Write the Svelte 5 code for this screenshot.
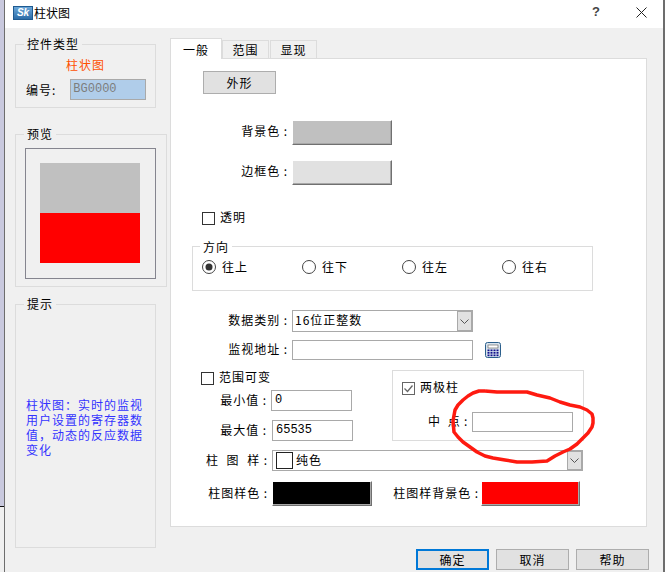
<script lang="ts">
  const tabs = ["一般", "范围", "显现"];
  const directions = ["往上", "往下", "往左", "往右"];
  const actions = ["确定", "取消", "帮助"];
  const scribble =
    "485,391 497,392 512,392 527,392 537,395 550,398 560,402 570,405 580,407 587,410 592,414 593,418 593,423 592,427 588,433 583,438 577,444 570,449 563,452 555,456 547,461 532,462 517,462 505,460 493,458 485,456 477,452 470,447 463,442 458,437 454,432 453,421 455,410 458,405 463,400 468,396 473,393 479,391 485,391";
</script>

<div class="window">
  <div class="strip"></div>
  <div class="dialog">
    <header class="titlebar">
      <div class="logo"><span>Sk</span></div>
      <span class="title">柱状图</span>
      <span class="help">?</span>
      <svg class="close" width="11" height="11" viewBox="0 0 11 11">
        <path d="M.5.5l10 10M10.5.5l-10 10" stroke="#222" fill="none" />
      </svg>
    </header>

    <div class="content">
      <aside class="side">
        <section class="group type-box">
          <span class="legend">控件类型</span>
          <div class="type-name">柱状图</div>
          <div class="type-row">
            <span>编号:</span>
            <div class="code">BG0000</div>
          </div>
        </section>

        <section class="group preview-box">
          <span class="legend">预览</span>
          <div class="preview-frame">
            <div class="bar">
              <div class="bar__bg"></div>
              <div class="bar__fg"></div>
            </div>
          </div>
        </section>

        <section class="group tip-box">
          <span class="legend">提示</span>
          <p class="tip">柱状图：实时的监视用户设置的寄存器数值，动态的反应数据变化</p>
        </section>
      </aside>

      <main class="main">
        <div class="tabs">
          {#each tabs as tab, i}
            <div class="tab" class:tab--active={i === 0}>{tab}</div>
          {/each}
        </div>

        <div class="page">
          <button class="shape-btn">外形</button>

          <div class="row row--bg">
            <span class="label">背景色&thinsp;:</span>
            <div class="swatch swatch--gray"></div>
          </div>
          <div class="row row--border">
            <span class="label">边框色&thinsp;:</span>
            <div class="swatch swatch--light"></div>
          </div>

          <div class="check check--clear"><span class="box"></span><span class="check__text">透明</span></div>

          <section class="group dir-box">
            <span class="legend">方向</span>
            <div class="radios">
              {#each directions as dir, i}
                <div class="radio">
                  <svg width="14" height="14" viewBox="0 0 14 14">
                    <circle cx="7" cy="7" r="6.5" fill="#fff" stroke="#444" />
                    {#if i === 0}<circle cx="7" cy="7" r="3.5" fill="#333" />{/if}
                  </svg>
                  <span>{dir}</span>
                </div>
              {/each}
            </div>
          </section>

          <div class="row row--type">
            <span class="label">数据类别&thinsp;:</span>
            <div class="select select--type">
              <span class="select__text">16位正整数</span>
              <span class="select__arrow">
                <svg width="9" height="5" viewBox="0 0 9 5"><path d="M.5.5l4 4 4-4" fill="none" stroke="#555" /></svg>
              </span>
            </div>
          </div>
          <div class="row row--addr">
            <span class="label">监视地址&thinsp;:</span>
            <div class="input input--addr"></div>
            <svg class="calc" width="16" height="16" viewBox="0 0 16 16">
              <rect x=".5" y=".5" width="15" height="15" rx="2" fill="#d9e4ee" stroke="#2b5f8c" />
              <rect x="3" y="3" width="10" height="3" fill="#fff" stroke="#555" stroke-width=".6" />
              {#each [7.5, 10, 12.5] as y}
                {#each [2.5, 5.5, 8.5, 11.5] as x}
                  <rect {x} {y} width="2" height="1.7" fill="#10108c" />
                {/each}
              {/each}
            </svg>
          </div>

          <div class="split">
            <div class="range">
              <div class="check check--range"><span class="box"></span><span class="check__text">范围可变</span></div>
              <div class="row row--min">
                <span class="label">最小值&thinsp;:</span>
                <div class="input input--min">0</div>
              </div>
              <div class="row row--max">
                <span class="label">最大值&thinsp;:</span>
                <div class="input input--min">65535</div>
              </div>
            </div>
            <div class="bipolar">
              <div class="check check--bi">
                <span class="box box--checked">
                  <svg width="11" height="11" viewBox="0 0 11 11"><path d="M1.5 5.5l3 3 5-6" fill="none" stroke="#666" stroke-width="1.3" /></svg>
                </span><span class="check__text">两极柱</span>
              </div>
              <div class="mid">
                <span class="mid__label">中 点&thinsp;:</span>
                <div class="input input--mid"></div>
              </div>
            </div>
          </div>

          <div class="row row--pattern">
            <span class="label">柱 图 样&thinsp;:</span>
            <div class="select select--pattern">
              <span class="pattern-chip"></span>
              <span class="select__text">纯色</span>
              <span class="select__arrow">
                <svg width="9" height="5" viewBox="0 0 9 5"><path d="M.5.5l4 4 4-4" fill="none" stroke="#555" /></svg>
              </span>
            </div>
          </div>

          <div class="row row--colors">
            <span class="label">柱图样色&thinsp;:</span>
            <div class="swatch swatch--black"></div>
            <span class="label label--second">柱图样背景色&thinsp;:</span>
            <div class="swatch swatch--red"></div>
          </div>
        </div>

        <div class="actions">
          {#each actions as action, i}
            <button class="action" class:action--default={i === 0}>{action}</button>
          {/each}
        </div>
      </main>
    </div>
  </div>
  <div class="edge"></div>

  <!-- hand drawn marker over the dialog -->
  <svg class="marker" width="665" height="572" viewBox="0 0 665 572">
    <polyline points={scribble} fill="none" stroke="#fe1a10" stroke-width="3.5" stroke-linejoin="round" />
  </svg>
</div>

<style>
  :global(body) { margin: 0; background: #f0f0f0; }
  .window { position: relative; display: flex; width: 665px; height: 572px; overflow: hidden; font: 12px/14px "Noto Sans CJK SC", sans-serif; letter-spacing: 1px; color: #000; }
  .strip { width: 4px; height: 506px; flex: none; background: #c9c9de; border-bottom: 1px solid #111; }
  .dialog { width: 659px; flex: none; display: flex; flex-direction: column; border-left: 1px solid #6d6d6d; box-sizing: border-box; background: #f0f0f0; }
  .edge { width: 2px; flex: none; background: #6d6d6d; }

  .titlebar { height: 28px; flex: none; display: flex; align-items: center; background: #fff; position: relative; }
  .logo { width: 20px; height: 14px; margin: -3px 0 0 8px; background: linear-gradient(#6aa6d8, #2c6ca8); border: 1px solid #1f5a90; box-sizing: border-box; display: flex; align-items: center; justify-content: center; }
  .logo span { font: italic bold 10px/10px "Liberation Sans", sans-serif; color: #fff; letter-spacing: 0; }
  .title { margin: -3px 0 0 1px; letter-spacing: 0; }
  .help { margin: -4px 0 0 auto; font: bold 13px/14px "Liberation Sans", sans-serif; color: #444; }
  .close { margin: -4px 16px 0 35px; }

  .content { flex: 1; display: flex; min-height: 0; }
  .side { width: 155px; margin-left: 10px; padding-top: 16px; flex: none; }
  .group { position: relative; box-sizing: border-box; border: 1px solid #dcdcdc; }
  .legend { position: absolute; top: -8px; left: 8px; padding: 0 3px; background: #f0f0f0; white-space: nowrap; }

  .type-box { width: 141px; height: 64px; }
  .type-name { margin-top: 13px; text-align: center; color: #ff5000; }
  .type-row { display: flex; align-items: center; margin: 7px 0 0 10px; }
  .code { width: 76px; height: 21px; margin-left: 14px; box-sizing: border-box; border: 1px solid #a9a9a9; background: #b0cdea; color: #7d7d7d; font: 12px/19px "Liberation Mono", monospace; letter-spacing: 0; padding-left: 2px; }

  .preview-box { width: 152px; height: 153px; margin-top: 26px; padding: 13px 0 0 9px; }
  .preview-frame { width: 131px; height: 131px; box-sizing: border-box; border: 1px solid #85858f; padding: 14px; }
  .bar { width: 100px; height: 100px; display: flex; flex-direction: column; }
  .bar__bg { flex: 1; background: #c0c0c0; }
  .bar__fg { flex: 1; background: #f00; }

  .tip-box { width: 141px; height: 244px; margin-top: 17px; display: flex; align-items: center; }
  .tip { margin: 2px 0 0 10px; width: 120px; line-height: 15px; color: #3333ff; }

  .main { width: 477px; padding-top: 10px; flex: none; }
  .tabs { display: flex; align-items: flex-end; height: 20px; }
  .tab { width: 47px; height: 18px; margin-right: 1px; box-sizing: border-box; border: 1px solid #dcdcdc; border-bottom: 0; text-align: center; line-height: 17px; }
  .tab--active { width: 52px; height: 21px; margin: 0 0 -1px; background: #fff; position: relative; line-height: 21px; }

  .page { height: 469px; box-sizing: border-box; border: 1px solid #dcdcdc; background: #fff; overflow: hidden; }
  .shape-btn { display: block; width: 73px; height: 23px; margin: 12px 0 0 32px; background: #e1e1e1; border: 1px solid #adadad; font: inherit; letter-spacing: 1px; padding: 0; }

  .row { display: flex; align-items: center; }
  .label { width: 117px; flex: none; text-align: right; white-space: nowrap; margin: 0 4px 2px 0; }
  .row--bg { margin-top: 26px; }
  .row--border { margin-top: 15px; }
  .row--bg .label, .row--border .label { margin-bottom: 4px; }
  .swatch { width: 100px; height: 25px; flex: none; box-sizing: border-box; border: 1px solid; border-color: #fff #707070 #707070 #fff; box-shadow: inset -1px -1px 0 #a8a8a8; }
  .swatch--gray { background: #c0c0c0; }
  .swatch--light { background: #e1e1e1; }
  .swatch--black { background: #000; }
  .swatch--red { background: #f00; width: 99px; }

  .check { display: flex; align-items: center; height: 14px; }
  .check__text { margin-bottom: 2px; }
  .box { width: 13px; height: 13px; margin-right: 5px; flex: none; box-sizing: border-box; border: 1px solid #333; background: #fff; display: flex; align-items: center; justify-content: center; }
  .box--checked { border-color: #666; }
  .check--clear { margin: 26px 0 0 31px; }

  .dir-box { width: 401px; height: 45px; margin: 21px 0 0 21px; }
  .dir-box .legend { left: 7px; top: -7px; background: #fff; }
  .radios { display: flex; padding: 13px 0 0 9px; }
  .radio { width: 100px; flex: none; display: flex; align-items: center; gap: 6px; }

  .row--type { margin-top: 19px; }
  .select { position: relative; display: flex; align-items: center; box-sizing: border-box; height: 22px; border: 1px solid #a9a9a9; background: #fff; padding-left: 2px; }
  .select--type { width: 181px; }
  .select--pattern { width: 311px; height: 21px; }
  .select__text { margin-bottom: 2px; }
  .select__arrow { margin-left: auto; width: 15px; align-self: stretch; box-sizing: border-box; border: 1px solid #a9a9a9; background: #e1e1e1; display: flex; align-items: center; justify-content: center; }

  .input { box-sizing: border-box; border: 1px solid #a9a9a9; background: #fff; font: 12px/18px "Liberation Mono", monospace; letter-spacing: 0; padding-left: 3px; }
  .row--addr { margin-top: 8px; }
  .input--addr { width: 181px; height: 20px; }
  .calc { margin-left: 12px; }

  .split { display: flex; margin-top: 10px; }
  .range { width: 221px; flex: none; }
  .check--range { margin: 1px 0 0 30px; }
  .row--min { margin-top: 5px; }
  .row--max { margin-top: 9px; }
  .row--min .label { width: 96px; }
  .row--max .label { width: 96px; margin-right: 5px; }
  .input--min { width: 81px; height: 21px; }

  .bipolar { width: 192px; height: 71px; box-sizing: border-box; border: 1px solid #dcdcdc; }
  .check--bi { margin: 10px 0 0 9px; }
  .mid { display: flex; align-items: center; margin: 17px 0 0 35px; }
  .mid__label { width: 44px; white-space: pre; word-spacing: 3px; margin-bottom: 2px; }
  .input--mid { width: 101px; height: 20px; }

  .row--pattern { margin-top: 9px; }
  .row--pattern .label, .row--colors .label { width: 97px; }
  .row--pattern .label { word-spacing: 4px; }
  .pattern-chip { width: 15px; height: 15px; margin: 0 3px 0 1px; border: 1px solid #222; background: #fff; flex: none; }
  .row--colors { margin-top: 10px; }
  .row--colors .label--second { width: 107px; margin-right: 2px; }

  .actions { display: flex; justify-content: flex-end; gap: 7px; margin: 22px -2px 0 0; }
  .action { width: 73px; height: 21px; padding: 0; box-sizing: border-box; background: #e1e1e1; border: 1px solid #adadad; font: inherit; letter-spacing: 1px; }
  .action--default { border: 2px solid #0078d7; }

  .marker { position: absolute; left: 0; top: 0; pointer-events: none; }
</style>
